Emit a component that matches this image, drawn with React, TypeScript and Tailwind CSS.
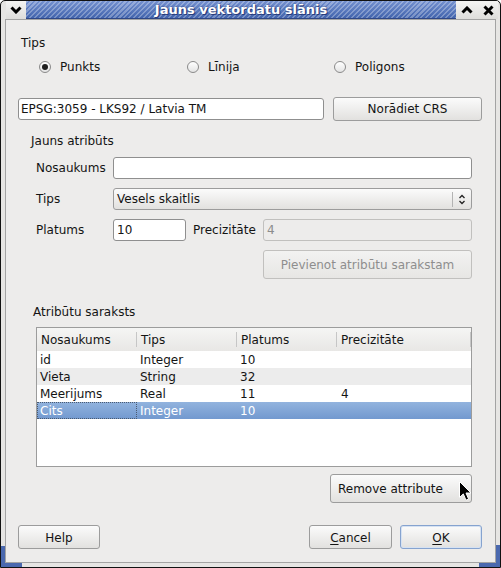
import React from "react";

type Row = { name: string; type: string; width: string; prec: string };

const rows: Row[] = [
  { name: "id", type: "Integer", width: "10", prec: "" },
  { name: "Vieta", type: "String", width: "32", prec: "" },
  { name: "Meerijums", type: "Real", width: "11", prec: "4" },
  { name: "Cits", type: "Integer", width: "10", prec: "" },
];

function Radio({ checked, label }: { checked?: boolean; label: string }) {
  return (
    <div className="flex items-center">
      <div className="flex h-[12px] w-[12px] items-center justify-center rounded-full border border-[#8a8a8a] bg-linear-to-b from-white to-[#e4e4e4]">
        {checked && <div className="h-[6px] w-[6px] rounded-full bg-[#1e1e1e]" />}
      </div>
      <span className="ml-[9px] leading-[14px]">{label}</span>
    </div>
  );
}

function Chevron({ up }: { up?: boolean }) {
  return (
    <svg width="12" height="8" viewBox="0 0 12 8">
      <polyline
        points={up ? "1.5,6.5 6,2 10.5,6.5" : "1.5,1.5 6,6 10.5,1.5"}
        fill="none"
        stroke="#000"
        strokeWidth="3"
      />
    </svg>
  );
}

export default function App() {
  return (
    <div className="relative flex h-[568px] w-[501px] flex-col overflow-hidden rounded-t-[5px] border border-[#111] bg-[#e6e5e3] font-['DejaVu_Sans',sans-serif] text-[12px] text-[#141414]">
      {/* title bar */}
      <div className="flex h-[18px] items-stretch">
        <div className="w-[5px]" />
        <div className="flex w-[20px] items-center justify-center bg-linear-to-b from-[#f4f4f3] to-[#dedddb]">
          <Chevron />
        </div>
        <div className="flex flex-1 items-center justify-center border-b border-[#2f4786] bg-[repeating-linear-gradient(135deg,rgba(255,255,255,0.28)_0px,rgba(255,255,255,0.28)_1.5px,transparent_1.5px,transparent_3.5px),linear-gradient(#7491d0,#4264ad)]">
          <span className="text-[13px] font-bold leading-[16px] text-white [text-shadow:0_0_2px_#1f3370,1px_1px_0_#2a3f80]">
            Jauns vektordatu slānis
          </span>
        </div>
        <div className="flex w-[22px] items-center justify-center bg-linear-to-b from-[#f4f4f3] to-[#dedddb]">
          <Chevron up />
        </div>
        <div className="flex w-[20px] items-center justify-center bg-linear-to-b from-[#f4f4f3] to-[#dedddb]">
          <svg width="11" height="11" viewBox="0 0 11 11">
            <path d="M1.5 1.5 L9.5 9.5 M9.5 1.5 L1.5 9.5" stroke="#000" strokeWidth="3" />
          </svg>
        </div>
        <div className="w-[2px]" />
      </div>

      {/* dialog body */}
      <div className="mx-[4px] mb-[4px] flex flex-1 flex-col border border-[#a3a3a3] bg-[#edeceb] pl-[12px] pr-[13px]">
        <div className="ml-[3px] mt-[16px] leading-[14px]">Tips</div>

        <div className="mt-[10px] flex h-[14px] items-center">
          <div className="ml-[21px] w-[148px]">
            <Radio checked label="Punkts" />
          </div>
          <div className="w-[147px]">
            <Radio label="Līnija" />
          </div>
          <Radio label="Poligons" />
        </div>

        <div className="mt-[23px] flex h-[24px] items-center">
          <div className="flex h-[22px] w-[306px] items-center rounded-[3px] border border-[#8f8f8f] bg-white pl-[2px]">
            EPSG:3059 - LKS92 / Latvia TM
          </div>
          <div className="ml-[9px] flex h-[24px] w-[149px] items-center justify-center rounded-[3px] border border-[#9c9c9c] bg-linear-to-b from-[#fbfbfb] to-[#e2e1df]">
            Norādiet CRS
          </div>
        </div>

        <div className="ml-[13px] mt-[13px] leading-[14px]">Jauns atribūts</div>

        <div className="mt-[9px] flex h-[22px] items-center">
          <div className="ml-[18px] w-[77px]">Nosaukums</div>
          <div className="h-[22px] w-[359px] rounded-[3px] border border-[#8f8f8f] bg-white" />
        </div>

        <div className="mt-[9px] flex h-[22px] items-center">
          <div className="ml-[18px] w-[77px]">Tips</div>
          <div className="flex h-[22px] w-[359px] items-center rounded-[3px] border border-[#9c9c9c] bg-linear-to-b from-[#fbfbfb] to-[#e2e1df] pl-[3px]">
            <span>Vesels skaitlis</span>
            <div className="ml-auto h-[15px] w-px bg-[#b3b3b3]" />
            <div className="flex w-[18px] justify-center">
              <svg width="8" height="13" viewBox="0 0 8 13">
                <polyline points="1.5,5 4,2.5 6.5,5" fill="none" stroke="#222" strokeWidth="1.3" />
                <polyline points="1.5,8 4,10.5 6.5,8" fill="none" stroke="#222" strokeWidth="1.3" />
              </svg>
            </div>
          </div>
        </div>

        <div className="mt-[9px] flex h-[22px] items-center">
          <div className="ml-[18px] w-[77px]">Platums</div>
          <div className="flex h-[22px] w-[73px] items-center rounded-[3px] border border-[#8f8f8f] bg-white pl-[3px]">
            10
          </div>
          <div className="ml-[7px] w-[70px]">Precizitāte</div>
          <div className="flex h-[22px] w-[209px] items-center rounded-[3px] border border-[#c1c0be] bg-[#edeceb] pl-[3px] text-[#8c8c8c]">
            4
          </div>
        </div>

        <div className="ml-[245px] mt-[9px] flex h-[29px] w-[209px] items-center justify-center rounded-[3px] border border-[#c1c0be] bg-linear-to-b from-[#f2f2f1] to-[#e7e6e4] text-[#8e8e8e]">
          Pievienot atribūtu sarakstam
        </div>

        <div className="ml-[15px] mt-[26px] leading-[14px]">Atribūtu saraksts</div>

        {/* attribute table */}
        <div className="ml-[18px] mt-[8px] flex h-[140px] w-[436px] flex-col border border-[#9c9c9c] bg-white">
          <div className="flex h-[23px] bg-linear-to-b from-[#f5f5f4] to-[#e8e7e5]">
            {["Nosaukums", "Tips", "Platums"].map((h) => (
              <div key={h} className="flex w-[100px] items-center">
                <span className="flex-1 pl-[4px]">{h}</span>
                <div className="h-[15px] w-px bg-[#c6c6c6]" />
              </div>
            ))}
            <div className="flex w-[134px] items-center">
              <span className="flex-1 pl-[4px]">Precizitāte</span>
              <div className="h-[15px] w-px bg-[#c6c6c6]" />
            </div>
          </div>
          {rows.map((r, i) => {
            const sel = i === 3;
            const bg = sel
              ? "bg-linear-to-b from-[#92b3de] to-[#7299cf] text-white"
              : i % 2 === 1
              ? "bg-[#ececec]"
              : "bg-white";
            return (
              <div key={r.name} className={`flex h-[17px] pt-[1px] leading-[16px] ${bg}`}>
                <div
                  className={`-mt-[1px] w-[100px] pl-[3px] pt-[1px] ${
                    sel ? "outline outline-1 -outline-offset-1 outline-dotted outline-[#4a5a70]" : ""
                  }`}
                >
                  {r.name}
                </div>
                <div className="w-[100px] pl-[3px]">{r.type}</div>
                <div className="w-[100px] pl-[3px]">{r.width}</div>
                <div className="w-[134px] pl-[4px]">{r.prec}</div>
              </div>
            );
          })}
        </div>

        <div className="ml-[312px] mt-[7px] flex h-[29px] w-[142px] items-center rounded-[3px] border border-[#9c9c9c] bg-linear-to-b from-[#fbfbfb] to-[#e2e1df] pl-[7px]">
          Remove attribute
        </div>

        <div className="mt-[22px] flex h-[24px] items-center">
          <div className="flex h-[24px] w-[82px] items-center justify-center rounded-[3px] border border-[#9c9c9c] bg-linear-to-b from-[#fbfbfb] to-[#e2e1df] pt-px">
            Help
          </div>
          <div className="ml-[209px] flex h-[24px] w-[83px] items-center justify-center rounded-[3px] border border-[#9c9c9c] bg-linear-to-b from-[#fbfbfb] to-[#e2e1df] pt-px">
            <span>
              <span className="underline underline-offset-2">C</span>ancel
            </span>
          </div>
          <div className="ml-[8px] flex h-[24px] w-[82px] items-center justify-center rounded-[3px] border border-[#86a3cf] bg-linear-to-b from-[#fbfbfb] to-[#e2e1df] pt-px shadow-[inset_0_0_0_1px_#d6e2f2]">
            <span>
              <span className="underline underline-offset-2">O</span>K
            </span>
          </div>
        </div>
      </div>

      {/* resize corners */}
      <div className="absolute bottom-0 left-0 h-[4px] w-[21px] bg-[#4a68ae]" />
      <div className="absolute bottom-0 left-0 h-[21px] w-[4px] bg-[#4a68ae]" />
      <div className="absolute bottom-0 right-0 h-[4px] w-[21px] bg-[#4a68ae]" />
      <div className="absolute bottom-0 right-0 h-[22px] w-[4px] bg-[#4a68ae]" />

      {/* mouse pointer */}
      <svg
        className="absolute left-[458px] top-[480px]"
        width="13"
        height="21"
        viewBox="0 0 13 21"
      >
        <path
          d="M0.5 0.5 L0.5 16.5 L4.3 12.9 L7 19.2 L9.6 18.1 L7 12 L12 12 Z"
          fill="#000"
          stroke="#fff"
          strokeWidth="1"
          strokeLinejoin="round"
        />
      </svg>
    </div>
  );
}
